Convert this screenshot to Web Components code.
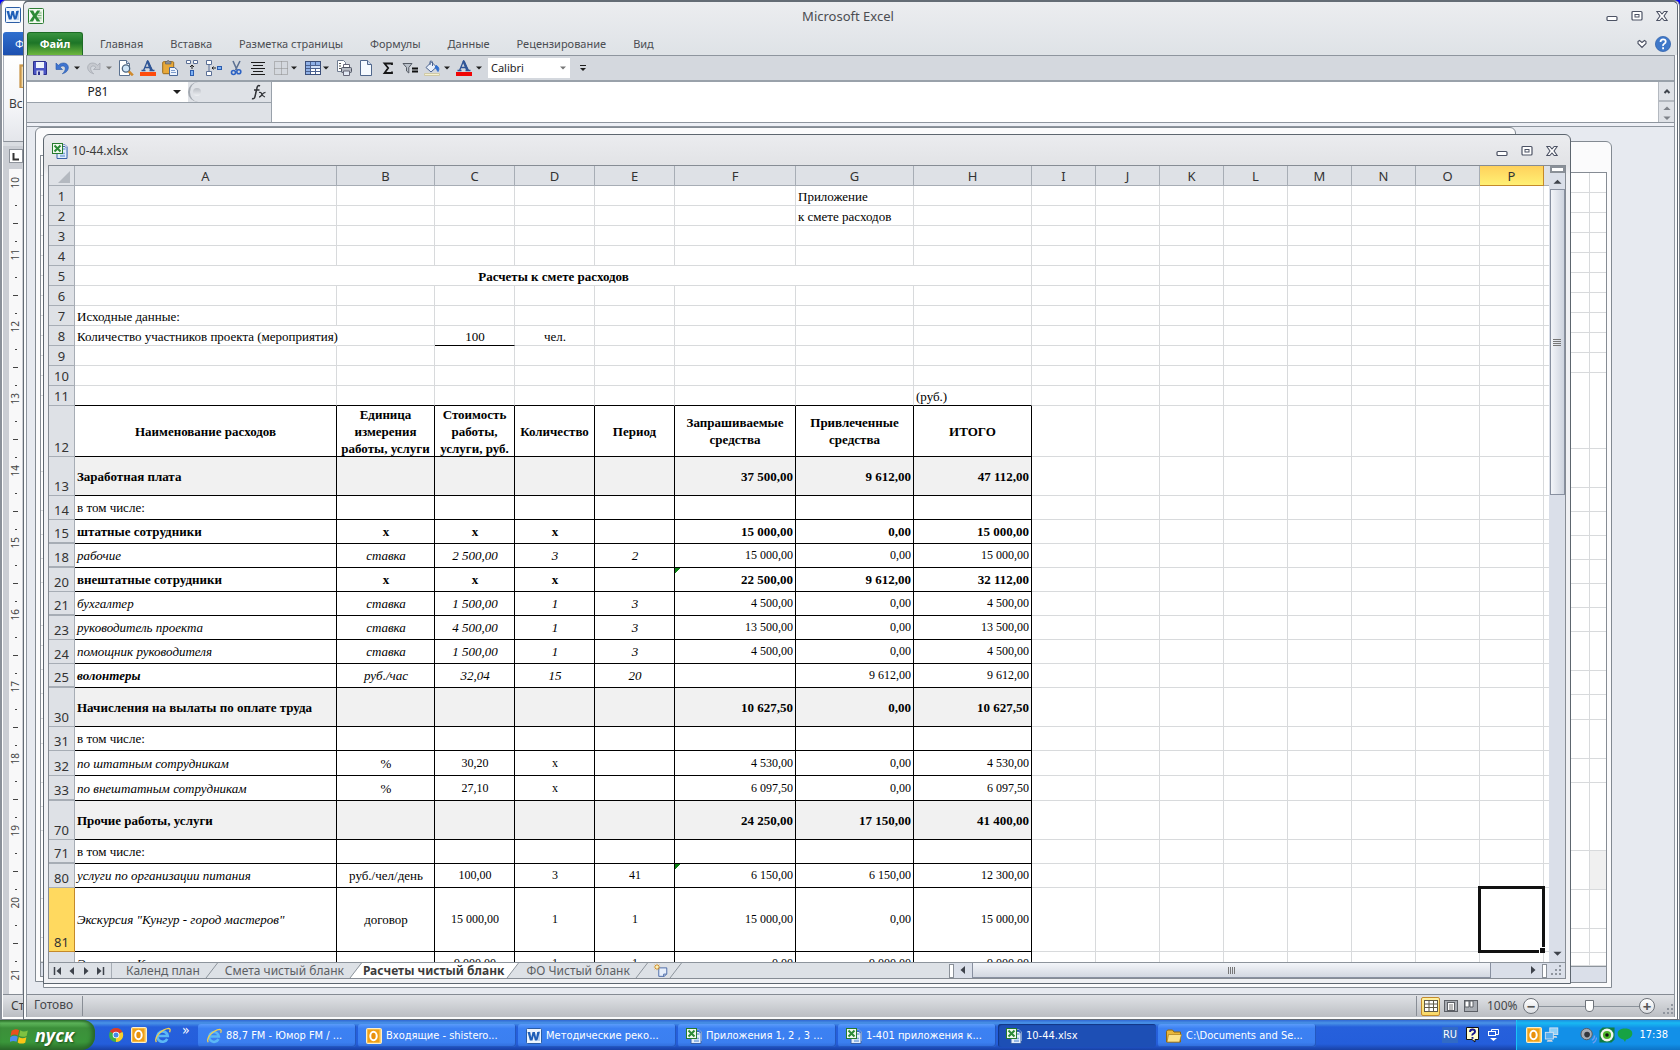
<!DOCTYPE html>
<html lang="ru">
<head>
<meta charset="utf-8">
<title>Microsoft Excel</title>
<style>
html,body{height:100%}
body{margin:0;background:#00f;overflow:hidden;font:12px/16px "Noto Sans","Open Sans",sans-serif;color:#3b3b3b}
</style>
</head>
<body>
<xp-desktop></xp-desktop>
<script>
const ICONS = {
  excel: [16, `<rect x=".5" y=".5" width="15" height="15" rx="1" fill="#f4faf2" stroke="#2d7d35"/><path d="M9 3h5v10H9z" fill="#dfeedd"/><path d="M9.5 5h4M9.5 7.5h4M9.5 10h4" stroke="#79b77a"/><path d="M1.500 2.500h3.700l1.700 3.200 2.200-3.200h3.200L8.600 8l3.800 5.500H8.700L6.800 10.100 5 13.500H1.300l3.700-5.500z" fill="#2b8a36"/>`],
  word: [16, `<rect x=".5" y=".5" width="15" height="15" rx="1" fill="#eef5fd" stroke="#2b5da5"/><path d="M12 3h2v10h-2z" fill="#bcd3f0"/><path d="M1.500 4h2.700l1 5.500L6.500 4h2.400l1.200 5.500L11.200 4h2.600l-2.400 8.500H8.900L7.700 7.800l-1.200 4.700H3.900z" fill="#1f5fb8"/>`],
  xlsdoc: [16, `<path d="M5 3.500h8l2 2v10H5z" fill="#e3eefb" stroke="#3a62a8"/><path d="M7 1.500h6l2.500 2.500v9" fill="none" stroke="#7d9ccc"/><path d="M8 10.500h5M8 13h5M10.500 6h3" stroke="#7ea6de" stroke-width="1.500"/><rect x=".5" y=".5" width="10" height="10" fill="#f2faef" stroke="#277a2e"/><path d="M2.500 2.500l6 6M8.500 2.500l-6 6" stroke="#2b8a36" stroke-width="2"/>`],
  save: [16, `<path d="M1.500 1.500h12l1 1v12h-13z" fill="#4a55c4" stroke="#2b2f8c"/><path d="M4 2h8v6H4z" fill="#eef3fb"/><path d="M4.500 10.500h7V15h-7z" fill="#d9dced"/><path d="M6 11.500h2V15H6z" fill="#2b2f8c"/>`],
  undo: [16, `<path d="M2 3v6.500h6.500L6.200 7.300C8 5.300 11 5.600 11.300 8.200c.2 2-1.200 4-3 5.600 4-1 6.300-3.600 6-6.800C13.900 2.700 8 1.500 4.400 5.300z" fill="#3f74cf" stroke="#2455a8" stroke-width=".6"/>`],
  redo: [16, `<path d="M14 3v6.500H7.500l2.300-2.200C8 5.300 5 5.600 4.700 8.200c-.2 2 1.200 4 3 5.600-4-1-6.300-3.600-6-6.800C2.100 2.700 8 1.500 11.600 5.300z" fill="#c6c9cf" stroke="#9b9fa8" stroke-width=".6"/>`],
  preview: [16, `<path d="M1.500.5h7l3 3v12h-10z" fill="#fff" stroke="#5a7190"/><path d="M8.500.5v3h3" fill="#cddcf0" stroke="#5a7190"/><circle cx="8" cy="8.500" r="3.700" fill="#cfe5f7" stroke="#4c6580" stroke-width="1.300"/><path d="M10.800 11.300l4 4" stroke="#d08a2d" stroke-width="2.600"/>`],
  fontred: [16, `<path d="M1.500 10.500h4M9.500 10.500h5M3.500 10.500L7.500 1l5 9.500M5 7.500h5" fill="none" stroke="#2f5596" stroke-width="1.300"/><path d="M7.500 1l4 9.500" stroke="#2f5596" stroke-width="2.400"/><path d="M0 12h16v4H0z" fill="#fe4b0c"/>`],
  fontred2: [16, `<path d="M1.500 10.500h4M9.500 10.500h5M3.500 10.500L7.500 1l5 9.500M5 7.500h5" fill="none" stroke="#2f5596" stroke-width="1.300"/><path d="M7.500 1l4 9.500" stroke="#2f5596" stroke-width="2.400"/><path d="M0 12h16v4H0z" fill="#f00505"/>`],
  paste: [16, `<rect x=".7" y="1.700" width="11" height="12" rx="1" fill="#e8a93a" stroke="#9a6a1a"/><path d="M3.500 1.500h1.300Q6.200-.8 7.600 1.500H9V4H3.500z" fill="#8b8f96" stroke="#54585e" stroke-width=".6"/><path d="M7.500 7.500h5l3 2.500v5.500h-8z" fill="#edf3fc" stroke="#4a6898"/><path d="M9 10.500h4M9 12.500h5" stroke="#7d9ccc"/>`],
  toprow: [16, `<path d="M2.500.500h4v3h-4zM9.500.500h4v3h-4z" fill="#fff" stroke="#5a6f96"/><path d="M8 5v4M6 7l2-2 2 2" fill="none" stroke="#222"/><rect x="6.500" y="10.500" width="3" height="5" fill="#7eb1f4" stroke="#2b5cae"/>`],
  tofirst: [16, `<path d="M.5.500h5v4h-5zM.5 11.500h5v4h-5z" fill="#fff" stroke="#5a6f96"/><path d="M3 5v6" stroke="#5a6f96"/><path d="M6 8h4M7.500 6.500L6 8l1.500 1.500" fill="none" stroke="#222"/><rect x="11.500" y="6.500" width="4" height="3" fill="#7eb1f4" stroke="#2b5cae"/>`],
  cut: [16, `<path d="M5 1l4 9M12 1L7.500 10" stroke="#5d7193" stroke-width="1.600"/><circle cx="5.500" cy="12.500" r="2" fill="none" stroke="#2c62c4" stroke-width="1.600"/><circle cx="10.800" cy="11.800" r="2" fill="none" stroke="#2c62c4" stroke-width="1.600"/>`],
  center: [16, `<path d="M1 2.500h14M3 5.500h10M1 8.500h14M3 11.500h10M1 14.500h14" stroke="#1c1c1c" stroke-width="1.200"/>`],
  borders: [16, `<path d="M1.500 1.500h13v13h-13zM8.500 1.500v13M1.500 8.500h13" fill="none" stroke="#8a8a8a" stroke-dasharray="1 1"/>`],
  table: [16, `<rect x=".5" y="1.500" width="15" height="13" fill="#fff" stroke="#3b4f7a"/><path d="M1 2h14v3H1zM1 5h4v9H1z" fill="#8fb0e6"/><path d="M1 5.500h14M1 8.500h14M1 11.500h14M5.500 2v12M10.500 2v12" stroke="#4b618f"/><path d="M6 6h9v2H6z" fill="#d3e1f7"/>`],
  print: [16, `<path d="M1.500.500h6l2 2v9h-8z" fill="#fff" stroke="#6e7b90"/><path d="M3 3.500h2M3 6h2M3 8.500h2" stroke="#555"/><path d="M7.500 4.500h6V8h-6z" fill="#fff" stroke="#667"/><rect x="5.500" y="7.500" width="10" height="5" rx="1" fill="#b6bac3" stroke="#4c5260"/><path d="M7.500 11h6v4.500h-6z" fill="#e3eaf5" stroke="#667"/>`],
  page: [16, `<path d="M2.500.500h7l4 4v11h-11z" fill="#f6faff" stroke="#50678c"/><path d="M9.500.500v4h4" fill="#cfdcf0" stroke="#50678c"/>`],
  sum: [16, `<path d="M12 5V3.500H4.500l3.700 4.500-3.700 5H12V11.500" fill="none" stroke="#161616" stroke-width="1.800"/>`],
  filter: [16, `<path d="M1 3.500h9L6.800 7.500V13L4.500 11V7.500z" fill="#b9c0c9" stroke="#555b64"/><path d="M10 8.500h6M10 11.500h6" stroke="#111" stroke-width="1.800"/>`],
  fill: [16, `<path d="M2 7.500L7.500 2l5 5L7 12z" fill="#e9f0fa" stroke="#4a6390"/><path d="M6 5V1.500Q7.500 0 8.500 2v4" fill="none" stroke="#4a6390"/><path d="M12 5.500c3 1 3.500 4 2 6-1-1-1.500-3-3-4z" fill="#2f6ed0" stroke="#2f6ed0"/><path d="M.5 13.500h15v2H.5z" fill="#f6f1d0" stroke="#cfc9a6"/>`],
  fx: [18, `<path d="M10 3Q7.500 1.500 6.800 5.500L5 13.500Q4.300 16.500 2 15.500M4 7h5.500" fill="none" stroke="#2f3136" stroke-width="1.500"/><path d="M9 9.500q2-.8 2.800 1.500t3.200 3M15.500 9.300q-2 0-3.500 2.400T9 14.200" fill="none" stroke="#2f3136" stroke-width="1.300"/>`],
  min: [12, `<rect x="1" y="6.500" width="10" height="4" rx="1" fill="#fff" stroke="#4c5264" stroke-width="1.200"/>`],
  max: [12, `<rect x="1" y="1.500" width="10" height="8.500" rx="1" fill="#fff" stroke="#4c5264" stroke-width="1.200"/><rect x="4" y="4.500" width="4" height="2.500" fill="#fff" stroke="#4c5264"/>`],
  close: [12, `<path d="M.8 1.500h3L6 4l2.200-2.500h3L8 6l3.200 4.500h-3L6 8l-2.200 2.500h-3L4 6z" fill="#fff" stroke="#4c5264" stroke-width="1.100"/>`],
  heart: [10, `<path d="M1 2.500l1.500-1L5 3.500l2.500-2 1.500 1v2L5 8.500l-4-4z" fill="#fff" stroke="#4c5264" stroke-width="1.100"/>`],
  help: [16, `<circle cx="8" cy="8" r="7.600" fill="#3f78c9" stroke="#2a5ca8" stroke-width=".7"/><path d="M5.500 6q0-2.700 2.600-2.700T10.700 5.800Q10.700 7 9.200 7.800T8.100 10M8.100 11.300v1.900" fill="none" stroke="#fff" stroke-width="1.800"/>`],
  newsheet: [18, `<path d="M6.500 5.500h9v7l-3 2.500h-6z" fill="#e7effb" stroke="#3f61a3"/><path d="M15 12.500h-3V15" fill="none" stroke="#3f61a3"/><path d="M4.500 1v7M1 4.500h7M2 2l5 5M7 2L2 7" stroke="#d98d18" stroke-width="1.100"/><circle cx="4.500" cy="4.500" r="1.500" fill="#fff3b0"/>`],
  first: [10, `<path d="M1.500 1v8" stroke="#3e434b" stroke-width="1.500"/><path d="M8 1v8L3.500 5z" fill="#3e434b"/>`],
  last: [10, `<path d="M8.500 1v8" stroke="#3e434b" stroke-width="1.500"/><path d="M2 1v8l4.500-4z" fill="#3e434b"/>`],
  prev: [10, `<path d="M7 1v8L2.500 5z" fill="#3e434b"/>`],
  next: [10, `<path d="M3 1v8l4.500-4z" fill="#3e434b"/>`],
  up: [10, `<path d="M5 3l4.500 4.500h-9z" fill="#3e434b"/>`],
  down: [10, `<path d="M5 7.500L9.500 3h-9z" fill="#3e434b"/>`],
  caret: [6, `<path d="M0 1.500h6L3 4.500z" fill="#1f1f1f"/>`],
  caretgray: [6, `<path d="M0 1.500h6L3 4.500z" fill="#777"/>`],
  more: [8, `<path d="M1 1.500h6" stroke="#1f1f1f" stroke-width="1.200"/><path d="M1 4h6L4 7z" fill="#1f1f1f"/>`],
  chevup: [8, `<path d="M1.500 6L4 3.500 6.500 6" fill="none" stroke="#3e434b" stroke-width="2"/>`],
  grip: [12, `<path d="M9 0h2v2H9zM5 4h2v2H5zM9 4h2v2H9zM1 8h2v2H1zM5 8h2v2H5zM9 8h2v2H9z" fill="#8f959e"/>`],
  normal: [16, `<rect x="1.500" y="2.500" width="13" height="11" fill="#fff" stroke="#5f5a48"/><path d="M1.500 6h13M1.500 9.500h13M6 2.500v11M10.500 2.500v11" stroke="#5f5a48"/>`],
  layout: [16, `<rect x="1.500" y="2.500" width="13" height="11" fill="#a8acb2" stroke="#5d6066"/><rect x="4.500" y="4.500" width="7" height="8" fill="#fff" stroke="#5d6066"/><path d="M6 7h4M6 9h4M6 11h4" stroke="#777"/>`],
  breaks: [16, `<rect x="1.500" y="2.500" width="13" height="11" fill="#a8acb2" stroke="#5d6066"/><path d="M2 3h4v6H2zM7 3h3v6H7z" fill="#fff" stroke="#5d6066"/>`],
  windows: [24, `<path d="M2 6q5-3.500 9.500-.7L10 12Q5.500 9.500.8 12.500z" fill="#e8501f"/><path d="M13 5.500q4 2.800 9.500.3L21 12.500q-5 2.500-9.500-.2z" fill="#7fc241"/><path d="M.5 14q5-3.200 9.300-.5L8.300 20q-4.300-2.600-9 .4z" fill="#4c8df0"/><path d="M11.200 14q4.300 2.800 9.500.3L19.200 21q-5 2.500-9.500-.3z" fill="#fbc516"/>`],
  chrome: [16, `<circle cx="8" cy="8" r="7" fill="#3fae49"/><path d="M8 8L1.800 4.500A7 7 0 0 1 14.300 5z" fill="#dd3a2c"/><path d="M8 8l6.500-3A7 7 0 0 1 8 15z" fill="#f8cf2c"/><circle cx="8" cy="8" r="3.300" fill="#fff"/><circle cx="8" cy="8" r="2.500" fill="#4688e8"/>`],
  outlook: [16, `<rect x=".5" y=".5" width="15" height="15" rx="1" fill="#fbd272" stroke="#fdeec8"/><rect x="1.500" y="1.500" width="12" height="13" fill="#f0a018"/><ellipse cx="7.500" cy="8" rx="3.200" ry="4.200" fill="#e8900c" stroke="#fff" stroke-width="2"/>`],
  ie: [18, `<path d="M14 12.500a5.500 5.500 0 1 1 .5-3h-10" fill="none" stroke="#5cb8f5" stroke-width="2.800"/><path d="M2.500 16C-.5 11 8 2.500 15.500 1.500q2.500.3 1 4" fill="none" stroke="#f3cf4e" stroke-width="1.400"/>`],
  folder: [16, `<path d="M.5 3.500l1-1.500h5l1.500 2h6.500v10H.5z" fill="#e8b63b" stroke="#8c6513"/><path d="M2.500 6.500h13l-2 7.500H1z" fill="#fbe28c" stroke="#a87b1c" stroke-width=".7"/>`],
  qmark: [16, `<path d="M1.500.500h12v12h-3.500v2.500l-3-2.500H1.500z" fill="#fffdd0" stroke="#111"/><path d="M5 5q0-2.500 2.500-2.500T10 4.800Q10 6 8.500 6.700T7.500 8.500M7.500 10v1.800" fill="none" stroke="#14148c" stroke-width="1.900"/>`],
  langbar: [12, `<path d="M3.500 2.500V.500h7v5h-3" fill="none" stroke="#fff"/><rect x=".5" y="2.500" width="7" height="4" fill="none" stroke="#fff"/><path d="M2 9h7l-3.500 3z" fill="#fff"/>`],
  network: [18, `<rect x="6.500" y="1" width="9" height="7.500" fill="#8fd0f7" stroke="#d8e3ef"/><path d="M9 10h5l1 2H8z" fill="#cfd6df"/><rect x="1.500" y="6" width="9" height="7.500" fill="#55aef0" stroke="#d8e3ef"/><path d="M4 14.500h5l1 2H3z" fill="#cfd6df"/>`],
  speaker: [18, `<circle cx="7" cy="7.500" r="6" fill="#a9adb5" stroke="#55595f"/><circle cx="7.500" cy="8" r="3" fill="#34373d"/><path d="M12.500 14q3-1.500 3-5M13.500 17q4-2 4-6" fill="none" stroke="#6f9df0" stroke-width="1.400"/>`],
  eye: [18, `<path d="M.5 4L4 .5h13.500V14L14 17.500H.5z" fill="#0f7e45"/><circle cx="9" cy="9" r="7.300" fill="#f2f6f0"/><circle cx="9" cy="9" r="4.600" fill="#4db329"/><circle cx="9" cy="9" r="2" fill="#111"/>`],
  balloon: [16, `<path d="M8 1.500c4 0 7.300 1.700 7.300 5S12 12 9 12.500L8 15l-1.500-2.500C3.500 12 .7 9.800.7 6.500S4 1.500 8 1.500z" fill="#17a344"/>`],
  clip: [16, `<rect x="1" y="1" width="18" height="15" fill="#f6dfb0" stroke="#c9974a" stroke-width="1.500"/>`],
  corner: [14, `<rect x=".5" y=".5" width="13" height="13" fill="#fff" stroke="#8e939b"/><path d="M4.500 4v6.500H10" fill="none" stroke="#333" stroke-width="2"/>`]
};

function define(name, css, render) {
  customElements.define(name, class extends HTMLElement {
    constructor() { super(); this.attachShadow({mode: 'open'}); }
    connectedCallback() {
      const t = document.createElement('template');
      t.innerHTML = `<style>*{box-sizing:border-box}button,input,select,textarea{font:inherit;color:inherit;margin:0;padding:0;border:0;background:none;border-radius:0;outline:0}${css}</style>` + render(this);
      this.shadowRoot.replaceChildren(t.content.cloneNode(true));
    }
  });
}

define('ui-icon', ':host{display:inline-flex;flex:none}svg{display:block}', el => {
  const [s, body] = ICONS[el.getAttribute('name')];
  const z = el.getAttribute('size') || s;
  return `<svg width="${z}" height="${z}" viewBox="0 0 ${s} ${s}" aria-hidden="true">${body}</svg>`;
});

define('window-controls', ':host{display:flex;gap:13px}button{display:flex}', () =>
  ['min:Свернуть', 'max:Развернуть', 'close:Закрыть'].map(x => {
    const [i, l] = x.split(':');
    return `<button aria-label="${l}"><ui-icon name="${i}"></ui-icon></button>`;
  }).join(''));

/* ---------- worksheet ---------- */
const HEAD = ['A','B','C','D','E','F','G','H','I','J','K','L','M','N','O','P'];
const WIDTHS = [262, 98, 80, 80, 80, 121, 118, 118, 64, 64, 64, 64, 64, 64, 64, 64];
const ROWS = [
  {n: 1, h: 20, c: {6: 'Приложение'}}, {n: 2, h: 20, c: {6: 'к смете расходов'}}, {n: 3, h: 20}, {n: 4, h: 20},
  {n: 5, h: 20, merge: 'Расчеты к смете расходов'}, {n: 6, h: 20}, {n: 7, h: 20, c: {0: 'Исходные данные:'}},
  {n: 8, h: 20, c: {0: 'Количество участников проекта (мероприятия)', 2: '100', 3: 'чел.'}}, {n: 9, h: 20}, {n: 10, h: 20},
  {n: 11, h: 20, k: 'last', c: {7: '(руб.)'}},
  {n: 12, h: 51, k: 'd hd b', c: ['Наименование расходов', 'Единица<br>измерения<br>работы, услуги', 'Стоимость<br>работы,<br>услуги, руб.', 'Количество', 'Период', 'Запрашиваемые<br>средства', 'Привлеченные<br>средства', 'ИТОГО']},
  {n: 13, h: 39, k: 'd b g', c: ['Заработная плата', '', '', '', '', '37 500,00', '9 612,00', '47 112,00']},
  {n: 14, h: 24, k: 'd', c: ['в том числе:']},
  {n: 15, h: 24, k: 'd b hid', c: ['штатные сотрудники', 'x', 'x', 'x', '', '15 000,00', '0,00', '15 000,00']},
  {n: 18, h: 24, k: 'd i hid', c: ['рабочие', 'ставка', '2 500,00', '3', '2', '15 000,00', '0,00', '15 000,00']},
  {n: 20, h: 24, k: 'd b err', c: ['внештатные сотрудники', 'x', 'x', 'x', '', '22 500,00', '9 612,00', '32 112,00']},
  {n: 21, h: 24, k: 'd i hid', c: ['бухгалтер', 'ставка', '1 500,00', '1', '3', '4 500,00', '0,00', '4 500,00']},
  {n: 23, h: 24, k: 'd i', c: ['руководитель проекта', 'ставка', '4 500,00', '1', '3', '13 500,00', '0,00', '13 500,00']},
  {n: 24, h: 24, k: 'd i', c: ['помощник руководителя', 'ставка', '1 500,00', '1', '3', '4 500,00', '0,00', '4 500,00']},
  {n: 25, h: 24, k: 'd i ab hid', c: ['волонтеры', 'руб./час', '32,04', '15', '20', '', '9 612,00', '9 612,00']},
  {n: 30, h: 39, k: 'd b g', c: ['Начисления на вылаты по оплате труда', '', '', '', '', '10 627,50', '0,00', '10 627,50']},
  {n: 31, h: 24, k: 'd', c: ['в том числе:']},
  {n: 32, h: 25, k: 'd ai', c: ['по штатным сотрудникам', '%', '30,20', 'x', '', '4 530,00', '0,00', '4 530,00']},
  {n: 33, h: 25, k: 'd ai hid', c: ['по внештатным сотрудникам', '%', '27,10', 'x', '', '6 097,50', '0,00', '6 097,50']},
  {n: 70, h: 39, k: 'd b g', c: ['Прочие работы, услуги', '', '', '', '', '24 250,00', '17 150,00', '41 400,00']},
  {n: 71, h: 24, k: 'd hid', c: ['в том числе:']},
  {n: 80, h: 24, k: 'd ai err', c: ['услуги по организации питания', 'руб./чел/день', '100,00', '3', '41', '6 150,00', '6 150,00', '12 300,00']},
  {n: 81, h: 64, k: 'd ai cur', c: ['Экскурсия "Кунгур - город мастеров"', 'договор', '15 000,00', '1', '1', '15 000,00', '0,00', '15 000,00']},
  {n: '', h: 24, k: 'd ai', c: ['Экскурсия К', '', '9 000,00', '1', '1', '0,00', '9 000,00', '9 000,00']}
];
define('sheet-grid', `
:host{display:block;overflow:hidden;background:#fff}
table{table-layout:fixed;border-collapse:separate;border-spacing:0;width:100%;font:13px/17px "Liberation Serif",serif;color:#000}
td,th{padding:0;border:0 solid #d8dadc;border-width:0 1px 1px 0}
th{background:#dee1e6;border-color:#a7adb5;font:13px/18px "Noto Sans","Open Sans",sans-serif;color:#333;vertical-align:bottom}
thead th{height:20px;vertical-align:middle;line-height:18px}
thead th:first-child svg{display:block;margin:2px 4px 0 auto}
th.sel{background:linear-gradient(#ffd15c,#fff074);border-color:#c4892a}
tbody th.sel{background:#ffd95f}
td{padding:0 1px 0 2px;white-space:nowrap;vertical-align:bottom}
td:last-child,thead th:last-child{border-right:0}
.last td:nth-child(-n+9){border-bottom-color:#000}
.d td:nth-child(-n+9){border-color:#000;vertical-align:middle;text-align:center}
.d td:nth-child(2){text-align:left}
.d td:nth-child(n+7):nth-child(-n+9){text-align:right;padding-right:2px}
.i td:nth-child(n+7),.ai td:nth-child(n+4){font-size:12px}
.d.hd td:nth-child(-n+9){text-align:center;padding:0}
.hd div{height:50px;overflow:hidden;display:flex;flex-direction:column;justify-content:center}
.b td{font-weight:bold}
.g td:nth-child(-n+9){background:#f1f1f1}
.i td:nth-child(-n+6),.ai td:nth-child(2){font-style:italic}
.ab td:nth-child(2){font-weight:bold}
.hid th{border-bottom-width:2px}
.over{border-right-color:#fff;overflow:visible}
.ul{border-bottom-color:#000}.c{text-align:center}
td.err{background:linear-gradient(135deg,#0b8013 4px,transparent 4px)}
td.active{position:relative}
td.active i{position:absolute;inset:-2px;border:3px solid #111}
td.active i::after{content:"";position:absolute;right:-3px;bottom:-3px;width:5px;height:5px;background:#111;border:1px solid #fff;border-width:1px 0 0 1px;box-sizing:content-box}
`, () => {
  const cols = '<col style="width:26px">' + WIDTHS.map(w => `<col style="width:${w}px">`).join('') + '<col>';
  const head = '<th><svg width="12" height="12"><path d="M12 0v12H0z" fill="#b4b9c0"/></svg></th>' +
    HEAD.map(h => `<th scope="col"${h === 'P' ? ' class="sel"' : ''}>${h}</th>`).join('') + '<th></th>';
  const body = ROWS.map(r => {
    const cur = /cur/.test(r.k || '');
    let s = `<tr class="${r.k || ''}" style="height:${r.h}px"><th scope="row"${cur ? ' class="sel"' : ''}>${r.n}</th>`;
    for (let i = 0; i < 17; i++) {
      if (r.merge && i === 0) { s += `<td colspan="8" class="c"><b>${r.merge}</b></td>`; i = 7; continue; }
      let v = (r.c && r.c[i]) || '', k = '';
      if (r.n === 12 && v) v = `<div><span>${v}</span></div>`;
      if (r.n === 8) k = ['over', '', 'ul c', 'c'][i] || '';
      if (i === 5 && /err/.test(r.k || '')) k = 'err';
      if (cur && i === 15) { k = 'active'; v = '<i></i>'; }
      s += `<td${k ? ` class="${k}"` : ''}>${v}</td>`;
    }
    return s + '</tr>';
  }).join('');
  return `<table><colgroup>${cols}</colgroup><thead><tr>${head}</tr></thead><tbody>${body}</tbody></table>`;
});

define('scroll-v', `
:host{display:flex;flex-direction:column;width:16px;background:#dadfe9;align-items:center}
.split{width:15px;height:7px;border:2px solid #8a9098;background:#fff;margin-bottom:4px;flex:none}
.thumb{width:15px;height:306px;margin-top:3px;border:1px solid #8890a0;background:linear-gradient(90deg,#f3f5f9,#cdd3de);display:flex;flex-direction:column;justify-content:center;align-items:center;gap:1px}
.thumb i{width:8px;height:1px;background:#777}
.sp{flex:1}ui-icon:last-child{margin-bottom:4px}
`, () => '<div class="split"></div><ui-icon name="up" size="9"></ui-icon><div class="thumb"><i></i><i></i><i></i><i></i></div><div class="sp"></div><ui-icon name="down" size="9"></ui-icon>');

define('sheet-tabs', `
:host{display:flex;height:16px;border-top:1px solid #8d949c;background:#dde1e6;font-size:12px;line-height:15px;color:#5c5f64}
.left{flex:none;width:900px;display:flex;overflow:hidden}
.nav{display:flex;gap:4px;padding:3px 3px 0 4px;width:63px;border-right:1px solid #a7adb5;flex:none}
.nav button,.new{display:flex}
.tab{padding:0 5px 0 7px;white-space:nowrap;flex:none;line-height:15px}
.nav+.tab{padding-left:14px}
.on{background:#fff;color:#3b3b3b;font-weight:bold;padding:0 2px 0 1px}
.new{margin-left:5px}
svg{display:block;flex:none}
.h{flex:1;display:flex;align-items:center;background:#dadfe9;min-width:0}
.split{width:5px;height:14px;border:1px solid #8a9098;background:#fff;flex:none}
.arrow{padding:0 4px;flex:none}
.track{flex:1;height:100%}
.thumb{width:94%;height:15px;border:1px solid #8890a0;border-top:0;background:linear-gradient(#f3f5f9,#d3d8e1);display:flex;justify-content:center;align-items:center;gap:1px}
.thumb i{width:1px;height:7px;background:#777}
.grip{margin:0 3px}
`, () => {
  const slope = (a, b) => `<svg width="13" height="15"><path d="M13 0L1 15H0V0z" fill="${a}"/><path d="M13 0L1 15h12z" fill="${b}"/><path d="M12.500 0L1 15" stroke="#8d949c" fill="none"/></svg>`;
  return `<div class="left"><div class="nav">${['first', 'prev', 'next', 'last'].map(n => `<button aria-label="${n}"><ui-icon name="${n}"></ui-icon></button>`).join('')}</div>
  <button class="tab">Календ план</button>${slope('#dde1e6', '#dde1e6')}
  <button class="tab">Смета чистый бланк</button>${slope('#dde1e6', '#fff')}
  <button class="tab on">Расчеты чистый бланк</button>${slope('#fff', '#dde1e6')}
  <button class="tab">ФО Чистый бланк</button>${slope('#dde1e6', '#dde1e6')}
  <button class="new" aria-label="Вставить лист"><ui-icon name="newsheet" size="16"></ui-icon></button>${slope('#dde1e6', '#dde1e6')}</div>
  <div class="h"><div class="split"></div><div class="arrow"><ui-icon name="prev"></ui-icon></div><div class="track"><div class="thumb"><i></i><i></i><i></i><i></i></div></div>
  <div class="arrow"><ui-icon name="next"></ui-icon></div><div class="split"></div><ui-icon class="grip" name="grip"></ui-icon></div>`;
});

define('blank-grid', `
:host{display:flex;flex-direction:column;background:#fff;overflow:hidden}
div{flex:none;border-bottom:1px solid #d8dadc;display:flex;justify-content:flex-end}
div:first-child{background:#dee1e6;border-color:#a7adb5}
i{width:17px;border-left:1px solid #d8dadc}
.foot{flex:1;background:#dadfe9;border:0;border-top:1px solid #8d949c}.foot i{display:none}
.g i{background:#f0f0f0}
`, el => el.getAttribute('rows').split(' ').map((h, n) => `<div style="height:${h}px"${n === +el.getAttribute('shade') ? ' class="g"' : ''}><i></i></div>`).join('') + '<div class="foot"></div>');

define('doc-window', `
:host{position:absolute;display:flex;flex-direction:column;border:1px solid #838a92;border-radius:6px 6px 0 0;background:#fbfbfc;padding:0 4px 4px}
:host([active]){border-color:#5d666f;background:linear-gradient(#ebecef,#e2e3e6 30px,#f0f1f4 40px)}
header{flex:none;height:var(--title,30px);display:flex;align-items:center;padding:2px 8px 0 4px;gap:4px;font-size:12px}
header span{flex:1}
.body{flex:1;min-height:0;border:1px solid #868c94;display:flex;flex-direction:column}
::slotted(*){flex:1;min-height:0}
`, el => `<header>${el.title ? `<ui-icon name="xlsdoc"></ui-icon><span>${el.title}</span><window-controls></window-controls>` : ''}</header><div class="body"><slot></slot></div>`);

define('work-sheet', `
:host{display:flex;flex-direction:column}
.row{flex:1;min-height:0;display:flex}
sheet-grid{flex:1;min-width:0}scroll-v{flex:none}sheet-tabs{flex:none}
`, () => '<div class="row"><sheet-grid></sheet-grid><scroll-v></scroll-v></div><sheet-tabs></sheet-tabs>');

/* ---------- ribbon parts ---------- */
define('ribbon-tabs', `
:host{display:flex;height:23px;font-size:11px;line-height:20px;color:#4b4d52}
.file{width:56px;background:linear-gradient(#3a9440,#1d7527 45%,#6db63e);border:1px solid #1d6b25;border-bottom:0;border-radius:3px 3px 0 0;color:#fff;font-weight:bold;margin-right:3px}
.t{padding:0 13px 0 14px}
.sp{flex:1}.r{display:flex;align-items:center;gap:8px;padding-right:3px}
`, () => `<button class="file">Файл</button>${['Главная', 'Вставка', 'Разметка страницы', 'Формулы', 'Данные', 'Рецензирование', 'Вид'].map(t => `<button class="t">${t}</button>`).join('')}<div class="sp"></div><div class="r"><ui-icon name="heart"></ui-icon><ui-icon name="help"></ui-icon></div>`);

define('quick-access', `
:host{display:flex;align-items:center;height:24px;background:#d4d8de;padding-left:2px}
button{width:22px;height:22px;display:flex;align-items:center;justify-content:center;flex:none}
.w{width:32px;gap:4px}.m{width:32px;gap:2px}
.combo{display:flex;align-items:center;width:82px;height:20px;background:#fff;margin:0 9px 0 3px;padding:0 4px 0 3px;font-size:11px;color:#222}
select{appearance:none;flex:1;min-width:0}
.more{width:8px}
`, () => {
  const list = 'save undo:w redo:w preview fontred paste toprow tofirst cut center borders:m table:m print page sum filter fill:w fontred2:w'.split(' ');
  return list.map(x => {
    const [n, k] = x.split(':');
    return `<button class="${k || ''}" aria-label="${n}"><ui-icon name="${n}"></ui-icon>${k ? `<ui-icon name="${n === 'redo' ? 'caretgray' : 'caret'}"></ui-icon>` : ''}</button>`;
  }).join('') + '<div class="combo"><select aria-label="Шрифт"><option>Calibri</option></select><ui-icon name="caretgray"></ui-icon></div><button class="more" aria-label="Настройка панели"><ui-icon name="more"></ui-icon></button>';
});

define('formula-bar', `
:host{display:flex;height:47px;border-top:2px solid #99a1aa;background:#dfe2e7}
.l{width:245px;border-right:1px solid #99a1aa;display:flex;flex-direction:column;flex:none;background:#dfe2e7}
.top{display:flex;align-items:center;height:21px;border-bottom:1px solid #99a1aa}
.nb{width:161px;height:20px;background:#fff;display:flex;align-items:center;gap:4px;padding-right:7px;font-size:12px;color:#222}
input{flex:1;min-width:0;text-align:center}
.knob{flex:1;height:20px;border-left:2px solid #a3a9b1;border-radius:10px 0 0 10px;display:flex;align-items:center;padding:0 3px 0 3px;justify-content:space-between}
.dot{width:8px;height:8px;border-radius:50%;background:linear-gradient(#b9bdc4,#eef0f3)}
.body{flex:1;display:flex;flex-direction:column;min-width:0}
.f{height:40px;display:flex;background:#fff}
textarea{flex:1;resize:none;display:block}
.sc{width:16px;background:#dfe2e7;display:flex;flex-direction:column;align-items:center;gap:2px;border-left:1px solid #b4b9c0}
.sc span{height:20px;width:15px;border-bottom:2px solid #b4b9c0;display:flex;align-items:center;justify-content:center}
.sc ui-icon{opacity:.6}.sc span ui-icon{opacity:1}
.wrap{flex:1;display:flex;flex-direction:column;background:#e4e7ed;min-width:0}
.main{display:flex;height:40px}
.strip{height:5px;border:1px solid #8e959e;border-width:1px 0;background:#eef0f6}
`, () => `<div class="wrap"><div class="main"><div class="l"><div class="top"><div class="nb"><input aria-label="Имя" value="P81"><ui-icon name="caret" size="8"></ui-icon></div><div class="knob"><span class="dot"></span><ui-icon name="fx"></ui-icon></div></div></div>
<div class="body"><div class="f"><textarea aria-label="Строка формул"></textarea><div class="sc"><span><ui-icon name="chevup"></ui-icon></span><ui-icon name="up" size="8"></ui-icon><ui-icon name="down" size="8"></ui-icon></div></div></div></div><div class="strip"></div></div>`);

define('status-bar', `
:host{display:flex;align-items:center;height:23px;border-top:1px solid #858b93;background:linear-gradient(#e0e2e6,#bbbec3);font-size:12px;color:#45474b}
.ready{padding:0 9px 0 7px;border-right:1px solid #888d95;height:20px;line-height:18px}
.sp{flex:1}
.v{display:flex;align-items:center;gap:1px;border-left:1px solid #888d95;padding:0 7px 0 4px;height:20px}
.v button{width:19px;height:19px;display:flex;align-items:center;justify-content:center}
.v .on{background:linear-gradient(#fff0a0,#f8d867);border:1px solid #c48a2c;border-radius:2px}
.pct{width:32px;margin-right:4px}
.rnd{width:16px;height:16px;border-radius:50%;border:1px solid #6e737a;background:linear-gradient(#fff,#dcdfe3);font-size:15px;line-height:13px;font-weight:bold;color:#555}
input{appearance:none;width:100px;height:14px;background:linear-gradient(#8b929b,#8b929b) center/100% 1px no-repeat;cursor:default}
input::-webkit-slider-thumb{appearance:none;width:9px;height:12px;background:#fff;border:1px solid #6e737a;border-radius:1px 1px 5px 5px}
.grip{margin:8px 0 0 7px}
`, () => `<div class="ready">Готово</div><div class="sp"></div><div class="v"><button class="on" aria-label="Обычный"><ui-icon name="normal"></ui-icon></button><button aria-label="Разметка"><ui-icon name="layout"></ui-icon></button><button aria-label="Страничный"><ui-icon name="breaks"></ui-icon></button></div>
<div class="pct">100%</div><button class="rnd" aria-label="Уменьшить">−</button><input type="range" min="0" max="100" value="50" aria-label="Масштаб"><button class="rnd" aria-label="Увеличить">+</button><ui-icon class="grip" name="grip"></ui-icon>`);

define('excel-app', `
:host{display:flex;flex-direction:column;border:1px solid #646c75;border-top-width:2px;border-radius:6px 6px 0 0;background:#fafbfc;overflow:hidden}
.top{background:linear-gradient(#ecedf0,#dfe3e7 50px);padding:0 3px}
.title{height:30px;display:grid;grid-template-columns:1fr auto 1fr;align-items:center;padding:0 6px 2px 1px;font-size:13px;color:#4b4d52}
window-controls{justify-self:end}
.main{flex:1;min-height:0;display:flex;flex-direction:column;margin:0 2px 2px;border:1px solid #8e959e;border-bottom:0}
.mdi{position:relative;flex:1;background:#e7eaf0;overflow:hidden}
.w2{inset:0 158px 12px 8px;--title:27px}
.w3{inset:14px 62px 6px 16px}
.w1{inset:7px 103px 10px 16px}
`, () => `<div class="top"><div class="title"><ui-icon name="excel"></ui-icon><span>Microsoft Excel</span><window-controls></window-controls></div><ribbon-tabs></ribbon-tabs></div>
<div class="main"><quick-access></quick-access><formula-bar></formula-bar><div class="mdi">
<doc-window class="w2"><blank-grid rows="20 20 20 20 20 20 20 20 20 20 20 20 76 39 24 24 24 43 20 24 24 25 25 39 24 24 68 39 24"></blank-grid></doc-window>
<doc-window class="w3"><blank-grid shade="24" rows="20 20 20 20 20 20 20 20 20 20 76 39 24 24 24 24 24 24 39 24 25 39 24 68 39 39 24 13"></blank-grid></doc-window>
<doc-window class="w1" active title="10-44.xlsx"><work-sheet></work-sheet></doc-window></div><status-bar></status-bar></div>`);

define('word-app', `
:host{display:flex;flex-direction:column;border:1px solid #7d848c;border-left:2px solid #8a9099;border-radius:6px 6px 0 0;background:#fff;padding:0 1px 2px;font-size:12px;overflow:hidden}
.t{height:31px;background:#fcfcfd;padding:6px 2px;flex:none}
.file{height:23px;width:90px;background:linear-gradient(#2f6fce,#1d50b0);border-radius:3px 3px 0 0;color:#fff;text-align:left;padding-left:12px;flex:none;font-size:11px}
.rib{height:87px;background:linear-gradient(#fff,#f4f5f8 60%,#e4e6eb);border:1px solid #a9afb8;border-bottom-color:#8e939b;flex:none;display:flex;flex-direction:column;padding:8px 0 0 13px;white-space:nowrap;overflow:hidden}
.rib ui-icon{margin-left:2px}.rib span{margin:8px 0 0 -8px}
.doc{flex:1;min-height:0;background:#cbced4;border-top:4px solid #d9dce1;display:flex;flex-direction:column;padding:3px 0 0 6px}
.c{height:20px}
.ruler{flex:1;min-height:0;width:13px;background:#f8f8f9;display:flex;flex-direction:column;align-items:center;font-size:10px;line-height:13px;color:#444;overflow:hidden;padding-top:8px}
.ruler div{height:72px;flex:none;display:flex;flex-direction:column;align-items:center;justify-content:space-between;padding-bottom:7px}
.ruler b{font-weight:normal;writing-mode:vertical-rl;transform:rotate(180deg)}
.ruler i{width:2px;height:1px;background:#444}.ruler i.l{width:5px}
.st{height:23px;background:linear-gradient(#e0e2e6,#bbbec3);border-top:1px solid #858b93;flex:none;padding:3px 0 0 8px}
`, () => `<div class="t"><ui-icon name="word"></ui-icon></div><button class="file">Ф</button><div class="rib"><ui-icon name="clip" size="24"></ui-icon><span>Вс</span></div>
<div class="doc"><div class="c"><ui-icon name="corner"></ui-icon></div><div class="ruler">${[10,11,12,13,14,15,16,17,18,19,20,21].map(n => `<div><b>${n}</b><i></i><i class="l"></i><i></i></div>`).join('')}</div></div><div class="st">Ст</div>`);

/* ---------- taskbar ---------- */
define('task-button', `
:host{display:block;width:158px;flex:0 1 158px;min-width:0}
button{width:100%;height:23px;display:flex;align-items:center;gap:4px;padding:0 0 0 8px;border-radius:3px;background:linear-gradient(#5a9bfa,#3c81f3 20%,#3b7ff0 80%,#2f6bd8);color:#fff;text-align:left;box-shadow:inset -1px -1px 0 #2458bf}
:host([on]) button{background:#1d4fb5;box-shadow:inset 1px 1px 1px #123684}
span{flex:1;white-space:nowrap;overflow:hidden}
`, el => `<button><ui-icon name="${el.getAttribute('icon')}" size="16"></ui-icon><span><slot></slot></span></button>`);

define('xp-taskbar', `
:host{display:flex;height:30px;background:linear-gradient(#3168d5,#4993e6 3px,#2660dc 7px,#245edb 24px,#1941a5);color:#fff;font:11px/14px "DejaVu Sans Condensed","DejaVu Sans",sans-serif;align-items:stretch}
.start{width:95px;flex:none;background:linear-gradient(#2f7a2d,#5fb85c 3px,#3c8f3a 8px,#3a963a 22px,#2a6a29);border-radius:0 12px 14px 0;color:#fff;display:flex;align-items:center;gap:6px;padding-left:10px;font:italic bold 18px/24px "Open Sans","Liberation Sans",sans-serif;text-shadow:1px 1px 2px #1c4c1b;box-shadow:inset -3px 0 4px #28642a}
.ql{width:103px;flex:none;display:flex;align-items:center;gap:7px;padding-left:13px}
.ql span{font-size:14px;margin:-10px 0 0 4px}
.tasks{flex:1;display:flex;gap:2px;align-items:center;min-width:0;padding-top:1px}
.lang{display:flex;align-items:center;gap:7px;flex:none;padding-right:16px}
.lang b{font-weight:normal;background:#316ac5;padding:1px 1px}
.tray{width:164px;flex:none;display:flex;align-items:center;background:linear-gradient(#1c8fe0,#19b9f2 3px,#1290e8 8px,#1290e8 24px,#0d73c6);border-left:1px solid #19c4f6;padding:0 12px 0 9px;gap:2px}
.tray span{flex:1}.tray time{margin-left:4px}
`, () => `<button class="start"><ui-icon name="windows" size="19"></ui-icon>пуск</button>
<div class="ql"><ui-icon name="chrome"></ui-icon><ui-icon name="outlook"></ui-icon><ui-icon name="ie" size="17"></ui-icon><span>»</span></div>
<div class="tasks"><task-button icon="ie">88,7 FM - Юмор FM / ...</task-button><task-button icon="outlook">Входящие - shistero...</task-button><task-button icon="word">Методические реко...</task-button><task-button icon="xlsdoc">Приложения 1, 2 , 3 ...</task-button><task-button icon="xlsdoc">1-401 приложения к...</task-button><task-button icon="xlsdoc" on>10-44.xlsx</task-button><task-button icon="folder">C:\\Documents and Se...</task-button></div>
<div class="lang"><b>RU</b><ui-icon name="qmark"></ui-icon><ui-icon name="langbar" size="12"></ui-icon></div>
<div class="tray"><ui-icon name="outlook"></ui-icon><ui-icon name="network" size="16"></ui-icon><span></span><ui-icon name="speaker" size="17"></ui-icon><ui-icon name="eye" size="16"></ui-icon><ui-icon name="balloon"></ui-icon><time>17:38</time></div>`);

define('xp-desktop', `
:host{display:flex;flex-direction:column;height:100vh}
.desk{flex:1;position:relative;min-height:0}
word-app{position:absolute;inset:0}
excel-app{position:absolute;inset:0 2px 0 23px}
xp-taskbar{flex:none}
`, () => '<div class="desk"><word-app></word-app><excel-app></excel-app></div><xp-taskbar></xp-taskbar>');
</script>
</body>
</html>
